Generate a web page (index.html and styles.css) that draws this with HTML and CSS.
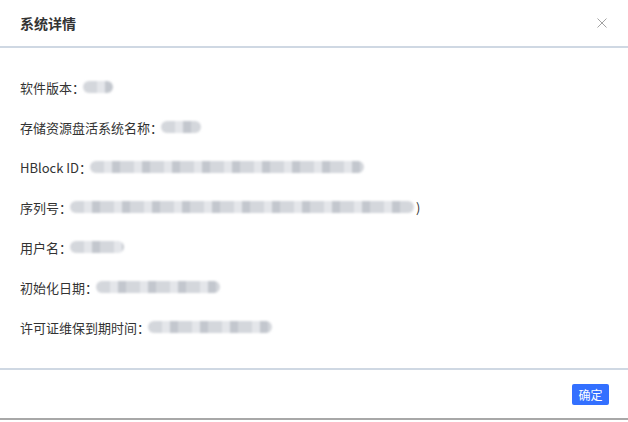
FILE: index.html
```html
<!DOCTYPE html>
<html lang="zh-CN">
<head>
  <meta charset="UTF-8"/>
  <title>系统详情</title>
  <link rel="stylesheet" href="styles.css">
</head>
<body>
  <div class="dialog">
    <div class="dialog-header">
      <span class="dialog-title">系统详情</span>
      <svg class="dialog-close" width="10" height="10" viewBox="0 0 10 10">
        <path d="M0.5 0.5L9.5 9.5M9.5 0.5L0.5 9.5" stroke="#a3a3a3" stroke-width="1" fill="none"/>
      </svg>
    </div>

    <div class="dialog-body">
      <div class="info-row"><span class="label">软件版本：</span><span class="masked" style="width: 30px"></span></div>
      <div class="info-row"><span class="label">存储资源盘活系统名称：</span><span class="masked" style="width: 40px"></span></div>
      <div class="info-row"><span class="label">HBlock ID：</span><span class="masked" style="width: 274px"></span></div>
      <div class="info-row"><span class="label">序列号：</span><span class="masked" style="width: 344px"></span><span class="tail">)</span></div>
      <div class="info-row"><span class="label">用户名：</span><span class="masked" style="width: 54px"></span></div>
      <div class="info-row"><span class="label">初始化日期：</span><span class="masked" style="width: 124px"></span></div>
      <div class="info-row"><span class="label">许可证维保到期时间：</span><span class="masked" style="width: 124px"></span></div>
    </div>

    <div class="dialog-footer">
      <button class="btn-primary">确定</button>
    </div>
  </div>
</body>
</html>
```

FILE: styles.css
```css
:root {
  --text-color: #333333;
  --line-color: #cfd8e3;
  --primary: #3370ff;
}

body {
  margin: 0;
  padding: 0;
  background: #ffffff;
  font-family: "Noto Sans CJK SC", "Noto Sans", sans-serif;
  color: var(--text-color);
}

.dialog {
  width: 628px;
  height: 418px;
  background: #ffffff;
  border-bottom: 2px solid #a8a8a8;
  display: flex;
  flex-direction: column;
}

.dialog-header {
  height: 46px;
  border-bottom: 2px solid var(--line-color);
  display: flex;
  align-items: center;
  justify-content: space-between;
  padding: 0 21px 0 20px;
}

.dialog-title {
  font-size: 14px;
  font-weight: 600;
  color: #333;
}

.dialog-body {
  flex: 1;
  padding: 19px 20px 21px;
}

.info-row {
  height: 40px;
  display: flex;
  align-items: center;
  font-size: 13px;
}

.label {
  white-space: nowrap;
}

.masked {
  display: inline-block;
  height: 12px;
  margin-left: -2px;
  border-radius: 6px;
  background: repeating-linear-gradient(to right, #d4d7dc 0, #d4d7dc 14px, #e4e6ea 14px, #e4e6ea 22px, #c3c7ce 22px, #c3c7ce 30px);
  filter: blur(1px);
}

.tail {
  margin-left: 2px;
}

.dialog-footer {
  height: 48px;
  border-top: 2px solid var(--line-color);
  display: flex;
  align-items: center;
  justify-content: flex-end;
  padding: 0 19px;
}

.btn-primary {
  width: 37px;
  height: 21px;
  padding: 0;
  border: none;
  border-radius: 2px;
  background: var(--primary);
  color: #ffffff;
  font-family: inherit;
  font-size: 12px;
}
```
